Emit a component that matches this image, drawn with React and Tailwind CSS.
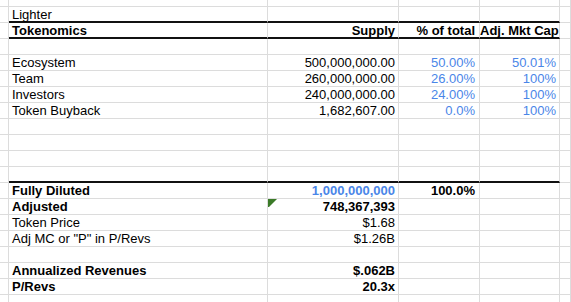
import React from 'react';

const BLUE = 'text-[#4a86e8]';

const rows = [
  { label: 'Lighter', thick: true },
  { label: 'Tokenomics', bold: true, c: 'Supply', d: '% of total', e: 'Adj. Mkt Cap', numBold: true, thick: true },
  {},
  { label: 'Ecosystem', c: '500,000,000.00', d: '50.00%', e: '50.01%', blueDE: true },
  { label: 'Team', c: '260,000,000.00', d: '26.00%', e: '100%', blueDE: true },
  { label: 'Investors', c: '240,000,000.00', d: '24.00%', e: '100%', blueDE: true },
  { label: 'Token Buyback', c: '1,682,607.00', d: '0.0%', e: '100%', blueDE: true },
  {},
  {},
  {},
  { thick: true },
  { label: 'Fully Diluted', bold: true, c: '1,000,000,000', cBlue: true, numBold: true, d: '100.0%' },
  { label: 'Adjusted', bold: true, c: '748,367,393', numBold: true, flag: true },
  { label: 'Token Price', c: '$1.68' },
  { label: 'Adj MC or "P" in P/Revs', c: '$1.26B' },
  {},
  { label: 'Annualized Revenues', bold: true, c: '$.062B', numBold: true },
  { label: 'P/Revs', bold: true, c: '20.3x', numBold: true },
];

const grid = 'border-r border-b border-[#dcdcdc]';

function Cell({ className = '', thick = false, children }) {
  return (
    <div
      className={`relative h-4 overflow-visible whitespace-nowrap text-[13px] leading-[15px] ${grid} ${
        thick ? 'border-b-2 border-b-[#111]' : ''
      } ${className}`}
    >
      {children}
    </div>
  );
}

function Flag() {
  return (
    <svg className="absolute left-0 top-0" width="9" height="8" viewBox="0 0 9 8">
      <polygon points="0,0 9,0 1,8 0,8" fill="#3b7a28" />
    </svg>
  );
}

export default function App() {
  return (
    <div
      className="w-[571px] h-[302px] overflow-hidden bg-white text-black"
      style={{ fontFamily: '"Liberation Sans", Arial, sans-serif' }}
    >
      <div className="grid grid-cols-[9px_259px_131px_81px_80px_1fr]">
        {/* partial top row */}
        {[0, 1, 2, 3, 4, 5].map((i) => (
          <div key={`top-${i}`} className={`h-[7px] ${grid}`} />
        ))}

        {rows.map((r, i) => {
          const num = r.numBold ? 'font-bold' : '';
          return (
            <React.Fragment key={i}>
              <Cell />
              <Cell thick={r.thick} className={`pl-[3px] ${r.bold ? 'font-bold' : ''}`}>
                {r.label}
              </Cell>
              <Cell thick={r.thick} className={`pr-[3px] text-right ${num} ${r.cBlue ? BLUE : ''}`}>
                {r.flag && <Flag />}
                {r.c}
              </Cell>
              <Cell
                thick={r.thick}
                className={`pr-[4px] text-right ${r.numBold || r.d === '100.0%' ? 'font-bold' : ''} ${
                  r.blueDE ? BLUE : ''
                }`}
              >
                {r.d}
              </Cell>
              <Cell thick={r.thick} className={`pr-[3px] text-right ${num} ${r.blueDE ? BLUE : ''}`}>
                {r.e}
              </Cell>
              <Cell />
            </React.Fragment>
          );
        })}

        {/* partial bottom row */}
        {[0, 1, 2, 3, 4, 5].map((i) => (
          <div key={`bot-${i}`} className={`h-4 ${grid}`} />
        ))}
      </div>
    </div>
  );
}
